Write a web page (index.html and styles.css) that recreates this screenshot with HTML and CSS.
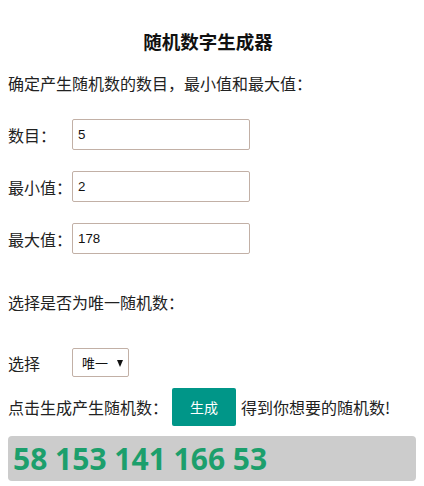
FILE: index.html
```html
<!DOCTYPE html>
<html lang="zh-CN">
<head>
<meta charset="utf-8">
<title>随机数字生成器</title>
<link rel="stylesheet" href="styles.css">
</head>
<body>
<div class="page">
  <h3 class="title">随机数字生成器</h3>
  <p class="intro">确定产生随机数的数目，最小值和最大值：</p>
  <div class="field first"><label class="label">数目：</label><input class="num" type="text" value="5"></div>
  <div class="field"><label class="label">最小值：</label><input class="num" type="text" value="2"></div>
  <div class="field"><label class="label">最大值：</label><input class="num" type="text" value="178"></div>
  <p class="intro question">选择是否为唯一随机数：</p>
  <div class="field choose"><label class="label">选择</label><span class="select-wrap"><select class="select"><option>唯一</option><option>不唯一</option></select></span></div>
  <div class="action"><span class="txt">点击生成产生随机数：</span><button class="btn" type="button">生成</button><span class="txt">得到你想要的随机数!</span></div>
  <div class="result">58 153 141 166 53</div>
</div>
</body>
</html>
```

FILE: styles.css
```css
html, body {
  margin: 0;
  padding: 0;
  background: #fff;
}
body {
  font-family: "Noto Sans CJK SC", "Noto Sans", sans-serif;
  color: #222;
  font-size: 16px;
}
.page {
  padding: 0 8px;
}
.title {
  margin: 29px 0 0;
  height: 24px;
  line-height: 24px;
  font-size: 18.5px;
  font-weight: 700;
  text-align: center;
  color: #111;
  padding-right: 8px;
}
.intro {
  margin: 18px 0 0;
  height: 24px;
  line-height: 24px;
  font-size: 16px;
}
.question {
  margin-top: 36px;
}
.field {
  display: flex;
  align-items: center;
  height: 31px;
  margin-top: 21px;
}
.field.first {
  margin-top: 24px;
}
.label {
  width: 64px;
  flex: none;
  font-size: 16px;
  line-height: 24px;
}
.num {
  box-sizing: border-box;
  width: 178px;
  height: 31px;
  margin: 0;
  padding: 0 5px;
  border: 1px solid #c2b0a6;
  border-radius: 2px;
  font-family: "Liberation Sans", Arial, sans-serif;
  font-size: 13.33px;
  color: #111;
  background: #fff;
  outline: none;
}
.choose {
  height: 29px;
  margin-top: 34px;
}
.select-wrap {
  position: relative;
  display: inline-block;
  width: 57px;
  height: 29px;
}
.select {
  -webkit-appearance: none;
  appearance: none;
  box-sizing: border-box;
  width: 57px;
  height: 29px;
  margin: 0;
  padding: 0 0 0 9px;
  border: 1px solid #c2b0a6;
  border-radius: 2px;
  background: #fff;
  font-family: "Noto Sans CJK SC", sans-serif;
  font-size: 13px;
  color: #111;
  outline: none;
}
.select-wrap::after {
  content: "";
  position: absolute;
  left: 45px;
  top: 12px;
  width: 0;
  height: 0;
  border-left: 3.5px solid transparent;
  border-right: 3.5px solid transparent;
  border-top: 7px solid #111;
  pointer-events: none;
}
.action {
  display: flex;
  align-items: center;
  margin-top: 11px;
  height: 38px;
}
.txt {
  font-size: 16px;
  line-height: 24px;
}
.btn {
  box-sizing: border-box;
  width: 64px;
  height: 38px;
  margin: 0 5px 0 4px;
  padding: 0;
  border: none;
  border-radius: 2px;
  background: #009688;
  color: #fff;
  font-family: "Noto Sans CJK SC", sans-serif;
  font-size: 14px;
}
.result {
  margin-top: 10px;
  height: 45px;
  line-height: 45px;
  padding-left: 5px;
  background: #cccccc;
  border-radius: 4px;
  font-family: "Open Sans", sans-serif;
  font-weight: 700;
  font-size: 30px;
  color: #1c9f6c;
}
```
